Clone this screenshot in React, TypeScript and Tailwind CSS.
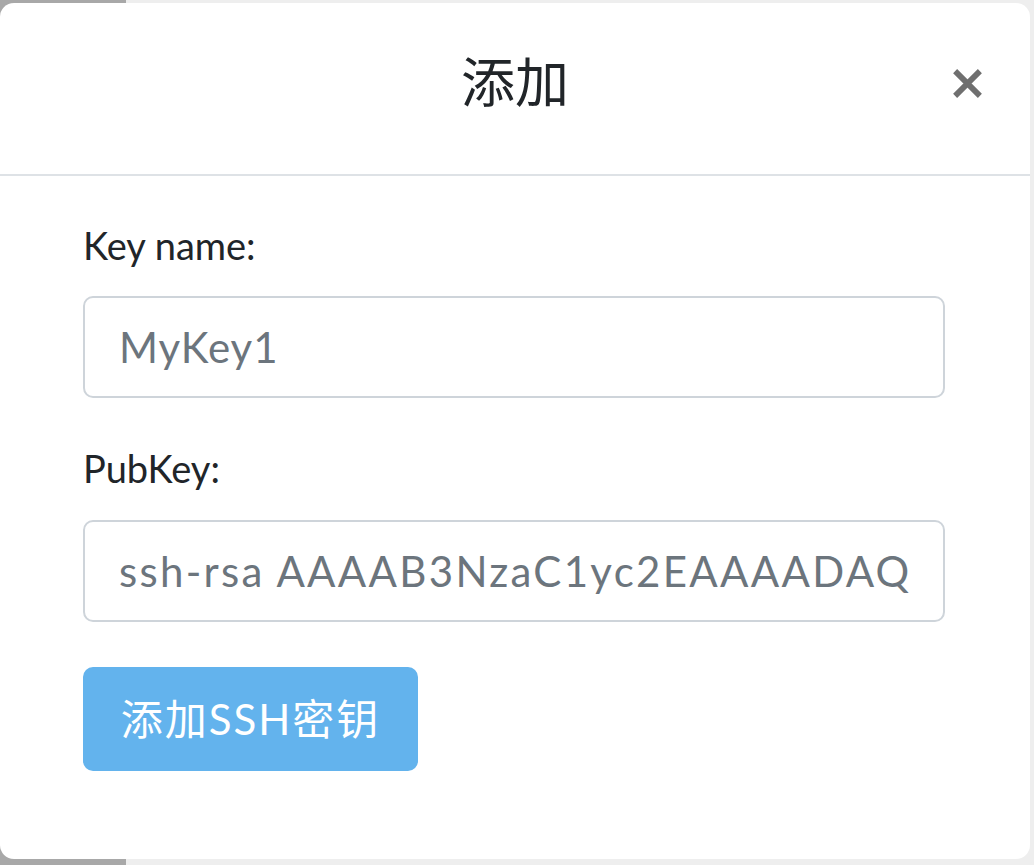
import { useState } from "react";

const font = { fontFamily: "Lato, 'Noto Sans CJK SC', sans-serif" };

export default function App() {
  const [name, setName] = useState("");
  const [pubKey, setPubKey] = useState("");

  return (
    <div className="relative h-[865px] w-[1034px] overflow-hidden bg-[#ececec]" style={font}>
      {/* page behind the overlay */}
      <div className="flex h-full">
        <div className="w-[126px] bg-[#a8a8a8]" />
        <div className="flex-1 bg-[#eeeeee]" />
      </div>

      {/* modal */}
      <div className="absolute left-0 top-[3px] flex h-[856px] w-[1030px] flex-col rounded-[14px] bg-white">
        <div className="relative flex h-[173px] items-start justify-center border-b-2 border-[#dee2e6] pt-[48px]">
          <h1 className="text-[54px] leading-[1.2] text-[#212529]">添加</h1>
          <button className="absolute right-[45px] top-[62px] flex h-[36px] w-[36px] items-center justify-center text-[#6f6f6f]">
            <svg width="33" height="33" viewBox="0 0 32 32" fill="none">
              <path d="M4 4 L28 28 M28 4 L4 28" stroke="currentColor" strokeWidth="5.5" />
            </svg>
          </button>
        </div>

        <form className="flex flex-col pl-[83px] pr-[85px] pt-[41px]" onSubmit={(e) => e.preventDefault()}>
          <label className="text-[38px] leading-[56px] text-[#212529]">Key name:</label>
          <input
            value={name}
            onChange={(e) => setName(e.target.value)}
            placeholder="MyKey1"
            className="mt-[23px] h-[102px] rounded-[10px] border-2 border-[#ced4da] px-[34px] text-[42px] tracking-[1px] text-[#495057] outline-none placeholder:text-[#6c757d]"
          />
          <label className="mt-[42px] text-[38px] leading-[56px] text-[#212529]">PubKey:</label>
          <input
            value={pubKey}
            onChange={(e) => setPubKey(e.target.value)}
            placeholder="ssh-rsa AAAAB3NzaC1yc2EAAAADAQ"
            className="mt-[24px] h-[102px] rounded-[10px] border-2 border-[#ced4da] px-[34px] text-[42px] tracking-[2.3px] text-[#495057] outline-none placeholder:text-[#6c757d]"
          />
          <div className="mt-[45px]">
            <button
              type="submit"
              className="h-[104px] w-[335px] rounded-[10px] bg-[#63b3ed] text-[42px] tracking-[2px] text-white"
            >
              添加SSH密钥
            </button>
          </div>
        </form>
      </div>
    </div>
  );
}
